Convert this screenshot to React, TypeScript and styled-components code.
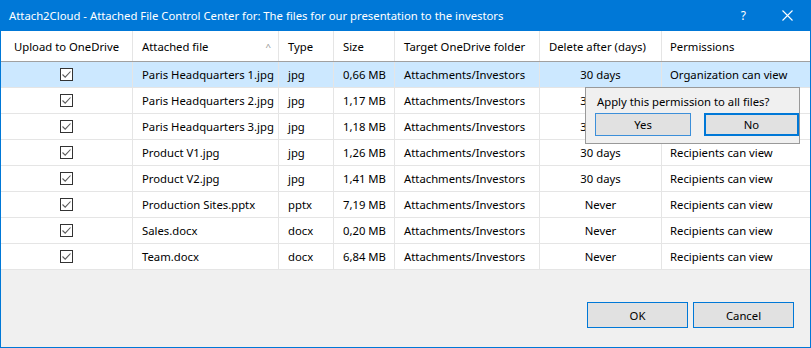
import styled, { createGlobalStyle } from 'styled-components';

const GlobalStyle = createGlobalStyle`
	html, body {
		margin: 0;
		padding: 0;
		background: #ffffff;
	}
	body {
		font-family: 'Noto Sans', 'Liberation Sans', sans-serif;
		font-size: 11.3px;
		color: #000000;
	}
`;

type Align = 'left' | 'center';

interface Column {
	title: string;
	width: number;
	pad: number;
}

const columns: Column[] = [
	{ title: 'Upload to OneDrive', width: 132, pad: 13 },
	{ title: 'Attached file', width: 146, pad: 9 },
	{ title: 'Type', width: 55, pad: 9 },
	{ title: 'Size', width: 61, pad: 9 },
	{ title: 'Target OneDrive folder', width: 145, pad: 9 },
	{ title: 'Delete after (days)', width: 122, pad: 9 },
	{ title: 'Permissions', width: 148, pad: 8 },
];

const files = [
	{ name: 'Paris Headquarters 1.jpg', type: 'jpg', size: '0,66 MB', del: '30 days', perm: 'Organization can view' },
	{ name: 'Paris Headquarters 2.jpg', type: 'jpg', size: '1,17 MB', del: '30 days', perm: 'Recipients can view' },
	{ name: 'Paris Headquarters 3.jpg', type: 'jpg', size: '1,18 MB', del: '30 days', perm: 'Recipients can view' },
	{ name: 'Product V1.jpg', type: 'jpg', size: '1,26 MB', del: '30 days', perm: 'Recipients can view' },
	{ name: 'Product V2.jpg', type: 'jpg', size: '1,41 MB', del: '30 days', perm: 'Recipients can view' },
	{ name: 'Production Sites.pptx', type: 'pptx', size: '7,19 MB', del: 'Never', perm: 'Recipients can view' },
	{ name: 'Sales.docx', type: 'docx', size: '0,20 MB', del: 'Never', perm: 'Recipients can view' },
	{ name: 'Team.docx', type: 'docx', size: '6,84 MB', del: 'Never', perm: 'Recipients can view' },
];

const gridTemplate = columns.map((c) => `${c.width}px`).join(' ');

function CheckMark() {
	return (
		<Check>
			<svg width="11" height="11" viewBox="0 0 11 11">
				<path d="M1.5 5.5 L4.2 8.2 L9.5 2.5" fill="none" stroke="#5a5a5a" strokeWidth="1.1" />
			</svg>
		</Check>
	);
}

function App() {
	return (
		<>
			<GlobalStyle />
			<Window>
				<TitleBar>
					<Title>Attach2Cloud - Attached File Control Center for: The files for our presentation to the investors</Title>
					<TitleButtons>
						<HelpGlyph>?</HelpGlyph>
						<svg width="11" height="11" viewBox="0 0 11 11">
							<path d="M0.5 0.5 L10.5 10.5 M10.5 0.5 L0.5 10.5" stroke="#ffffff" strokeWidth="1.1" />
						</svg>
					</TitleButtons>
				</TitleBar>

				<Table>
					<HeaderRow $template={gridTemplate}>
						{columns.map((col, i) => (
							<HeaderCell key={col.title} $pad={col.pad} $last={i === columns.length - 1}>
								{col.title}
								{i === 1 && <SortArrow>^</SortArrow>}
							</HeaderCell>
						))}
					</HeaderRow>
					{files.map((file, idx) => (
						<Row key={file.name} $template={gridTemplate} $selected={idx === 0}>
							<Cell $align="center" $pad={0}>
								<CheckMark />
							</Cell>
							<Cell $align="left" $pad={9}>{file.name}</Cell>
							<Cell $align="left" $pad={9}>{file.type}</Cell>
							<Cell $align="left" $pad={9}>{file.size}</Cell>
							<Cell $align="left" $pad={9}>Attachments/Investors</Cell>
							<Cell $align="center" $pad={0}>{file.del}</Cell>
							<Cell $align="left" $pad={8} $last>{file.perm}</Cell>
						</Row>
					))}
				</Table>

				<Footer>
					<DialogButton>OK</DialogButton>
					<DialogButton>Cancel</DialogButton>
				</Footer>

				<Popup>
					<PopupText>Apply this permission to all files?</PopupText>
					<PopupButtons>
						<PopupButton>Yes</PopupButton>
						<PopupButton $focused>No</PopupButton>
					</PopupButtons>
				</Popup>
			</Window>
		</>
	);
}

const Window = styled.div`
	position: relative;
	display: flex;
	flex-direction: column;
	box-sizing: border-box;
	width: 811px;
	height: 348px;
	border: 1px solid #0078d7;
	border-top: none;
	background: #f0f0f0;
`;

const TitleBar = styled.div`
	display: flex;
	align-items: center;
	justify-content: space-between;
	height: 31px;
	margin: 0 -1px;
	padding: 0 18px 0 9px;
	background: #0078d7;
	color: #ffffff;
`;

const Title = styled.div`
	font-size: 11.3px;
	white-space: nowrap;
`;

const TitleButtons = styled.div`
	display: flex;
	gap: 36px;
	align-items: center;
`;

const HelpGlyph = styled.span`
	font-size: 12px;
`;

const Table = styled.div`
	display: flex;
	flex-direction: column;
	background: #ffffff;
	height: 239px;
`;

interface RowProps {
	$template: string;
	$selected?: boolean;
}

const HeaderRow = styled.div<RowProps>`
	display: grid;
	grid-template-columns: ${({ $template }) => $template};
	height: 31px;
	box-sizing: border-box;
	border-bottom: 1px solid #a0a0a0;
`;

const Row = styled.div<RowProps>`
	display: grid;
	grid-template-columns: ${({ $template }) => $template};
	height: 26px;
	box-sizing: border-box;
	border-bottom: 1px solid #e5e5e5;
	background: ${({ $selected }) => ($selected ? '#cce8ff' : '#ffffff')};
`;

interface CellProps {
	$pad: number;
	$align?: Align;
	$last?: boolean;
}

const HeaderCell = styled.div<CellProps>`
	position: relative;
	display: flex;
	align-items: center;
	padding-left: ${({ $pad }) => $pad}px;
	border-right: ${({ $last }) => ($last ? 'none' : '1px solid #e5e5e5')};
	white-space: nowrap;
`;

const SortArrow = styled.span`
	position: absolute;
	right: 7px;
	top: 10px;
	font-size: 8px;
	color: #909090;
	transform: scaleX(1.2);
`;

const Cell = styled.div<CellProps>`
	display: flex;
	align-items: center;
	justify-content: ${({ $align }) => ($align === 'center' ? 'center' : 'flex-start')};
	padding-left: ${({ $pad }) => $pad}px;
	border-right: ${({ $last }) => ($last ? 'none' : '1px solid #e5e5e5')};
	white-space: nowrap;
	overflow: hidden;
`;

const Check = styled.span`
	display: flex;
	align-items: center;
	justify-content: center;
	box-sizing: border-box;
	width: 13px;
	height: 13px;
	border: 1px solid #333333;
	background: #ffffff;
`;

const Footer = styled.div`
	display: flex;
	justify-content: flex-end;
	gap: 5px;
	padding: 32px 16px 0 0;
`;

interface ButtonProps {
	$focused?: boolean;
}

const DialogButton = styled.div`
	display: flex;
	align-items: center;
	justify-content: center;
	box-sizing: border-box;
	width: 101px;
	height: 26px;
	border: 1px solid #0078d7;
	background: #e1e1e1;
`;

const Popup = styled.div`
	position: absolute;
	left: 584px;
	top: 87px;
	box-sizing: border-box;
	width: 215px;
	height: 57px;
	padding: 5px 0 0 9px;
	border: 1px solid #999999;
	background: #f0f0f0;
`;

const PopupText = styled.div`
	height: 20px;
	padding-left: 2px;
	line-height: 18px;
`;

const PopupButtons = styled.div`
	display: flex;
	gap: 13px;
`;

const PopupButton = styled.div<ButtonProps>`
	display: flex;
	align-items: center;
	justify-content: center;
	box-sizing: border-box;
	width: ${({ $focused }) => ($focused ? '95px' : '96px')};
	height: 23px;
	border: ${({ $focused }) => ($focused ? '2px solid #0078d7' : '1px solid #3c8fd9')};
	background: #e1e1e1;
`;

export default App;
